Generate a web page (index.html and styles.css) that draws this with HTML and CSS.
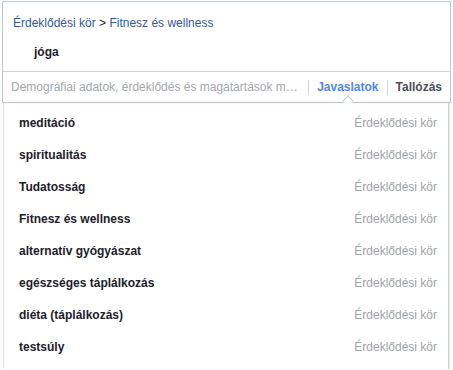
FILE: index.html
```html
<!DOCTYPE html>
<html lang="hu">
<head>
  <meta charset="UTF-8"/>
  <title>Részletes célzás</title>
  <link rel="stylesheet" href="styles.css">
</head>
<body>

  <div class="picker">
    <!-- SELECTED -->
    <div class="selected">
      <div class="crumb">
        <a href="#">Érdeklődési kör</a> <span class="gt">&gt;</span> <a href="#">Fitnesz és wellness</a>
      </div>
      <div class="chosen">jóga</div>
    </div>

    <!-- SEARCH ROW -->
    <div class="search-row">
      <div class="search-input">Demográfiai adatok, érdeklődés és magatartások m…</div>
      <span class="sep"></span>
      <span class="tab active">Javaslatok</span>
      <span class="sep"></span>
      <span class="tab">Tallózás</span>
    </div>
  </div>

  <!-- SUGGESTIONS -->
  <ul class="suggestions">
    <li><span class="name">meditáció</span><span class="type">Érdeklődési kör</span></li>
    <li><span class="name">spiritualitás</span><span class="type">Érdeklődési kör</span></li>
    <li><span class="name">Tudatosság</span><span class="type">Érdeklődési kör</span></li>
    <li><span class="name">Fitnesz és wellness</span><span class="type">Érdeklődési kör</span></li>
    <li><span class="name">alternatív gyógyászat</span><span class="type">Érdeklődési kör</span></li>
    <li><span class="name">egészséges táplálkozás</span><span class="type">Érdeklődési kör</span></li>
    <li><span class="name">diéta (táplálkozás)</span><span class="type">Érdeklődési kör</span></li>
    <li><span class="name">testsúly</span><span class="type">Érdeklődési kör</span></li>
  </ul>

</body>
</html>
```

FILE: styles.css
```css
/* RESET */
* {
  margin: 0;
  padding: 0;
  box-sizing: border-box;
}

html, body {
  background: #fff;
  font-family: 'Liberation Sans', Arial, sans-serif;
  font-size: 12px;
  color: #1d2129;
  overflow: hidden;
}

/* PICKER BOX */
.picker {
  margin: 1px 2px 0 2px;
  border: 1px solid #bfc8da;
}

.selected {
  height: 70px;
  padding: 13px 10px 0 10px;
  border-bottom: 1px solid #cdd3df;
}

.crumb {
  line-height: 16px;
}

.crumb a {
  color: #365899;
  text-decoration: none;
}

.crumb .gt {
  color: #1d2129;
}

.chosen {
  margin-top: 13px;
  padding-left: 21px;
  font-weight: bold;
  line-height: 16px;
}

/* SEARCH ROW */
.search-row {
  position: relative;
  height: 30px;
  display: flex;
  align-items: center;
  padding: 0 8px 0 8px;
}

.search-input {
  flex: 1;
  color: #a4a7ad;
  white-space: nowrap;
  overflow: hidden;
}

.sep {
  width: 1px;
  height: 15px;
  background: #c9d3e6;
  margin: 0 8px;
}

.tab {
  font-weight: bold;
  color: #4b4f56;
}

.tab.active {
  position: relative;
  color: #4f86f0;
}

/* caret under active tab */
.tab.active::after {
  content: "";
  position: absolute;
  left: 50%;
  bottom: -11px;
  width: 7px;
  height: 7px;
  margin-left: -4px;
  background: #fff;
  border-top: 1px solid #bfc8da;
  border-left: 1px solid #bfc8da;
  transform: rotate(45deg);
}

/* SUGGESTIONS */
.suggestions {
  list-style: none;
  margin: 0 4px 0 3px;
  padding-top: 4px;
  border-left: 1px solid #e3e4e8;
  border-right: 1px solid #d0d1d5;
  box-shadow: 1px 0 1px rgba(0, 0, 0, 0.08);
  height: 266px;
}

.suggestions li {
  height: 32px;
  display: flex;
  align-items: center;
  justify-content: space-between;
  padding: 0 11px 0 15px;
}

.suggestions .name {
  font-weight: bold;
  color: #1d2129;
}

.suggestions .type {
  color: #a0a3a9;
}
```
